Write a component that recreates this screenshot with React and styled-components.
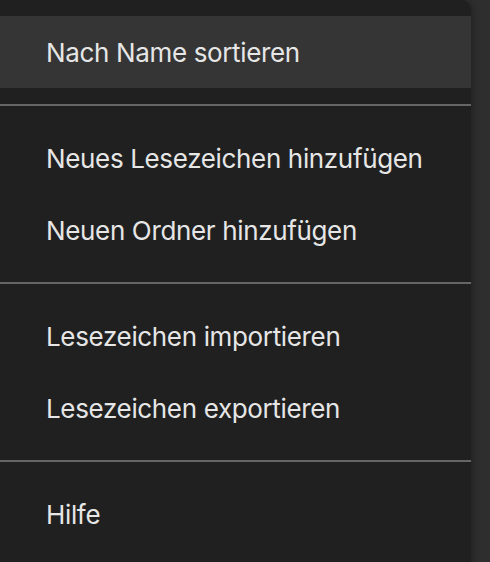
import styled, { createGlobalStyle } from "styled-components";

const GlobalStyle = createGlobalStyle`
  html, body {
    margin: 0;
    padding: 0;
    background: #2e2e2e;
    height: 100%;
    overflow: hidden;
  }
`;

const Menu = styled.div`
  width: 471px;
  min-height: 100vh;
  box-sizing: border-box;
  padding: 16px 0;
  background: #202020;
  border-top-right-radius: 10px;
  box-shadow: 2px 0 6px rgba(0, 0, 0, 0.25);
  font-family: Inter, "Noto Sans", "Liberation Sans", sans-serif;
`;

const Item = styled.div`
  height: 72px;
  display: flex;
  align-items: center;
  padding-left: 46px;
  font-size: 26px;
  letter-spacing: -0.35px;
  color: #e6e6e6;
  background: ${({ $active }) => ($active ? "#353535" : "transparent")};
`;

const Divider = styled.hr`
  margin: 16px 0;
  border: none;
  height: 2px;
  background: #666;
`;

const groups = [
  ["Nach Name sortieren"],
  ["Neues Lesezeichen hinzufügen", "Neuen Ordner hinzufügen"],
  ["Lesezeichen importieren", "Lesezeichen exportieren"],
  ["Hilfe"],
];

export default function App() {
  return (
    <>
      <GlobalStyle />
      <Menu>
        {groups.map((group, gi) => (
          <div key={gi}>
            {gi > 0 && <Divider />}
            {group.map((label) => (
              <Item key={label} $active={label === "Nach Name sortieren"}>
                {label}
              </Item>
            ))}
          </div>
        ))}
      </Menu>
    </>
  );
}
